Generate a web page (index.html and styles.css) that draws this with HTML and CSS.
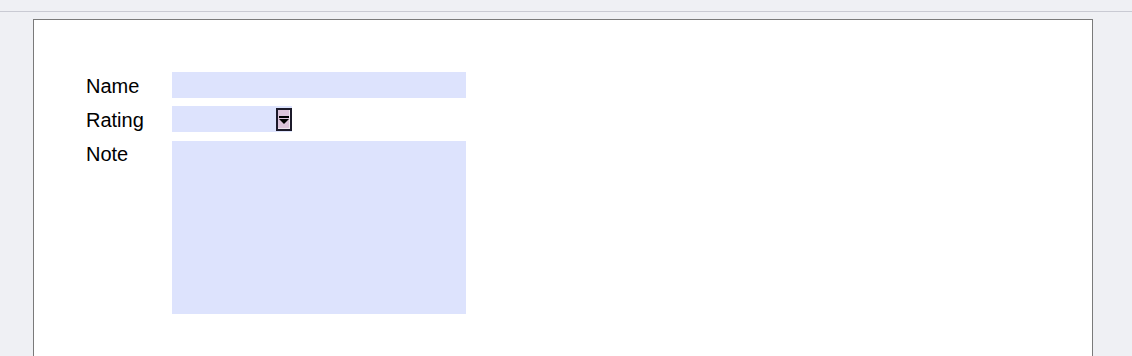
FILE: index.html
```html
<!DOCTYPE html>
<html lang="en">
<head>
<meta charset="utf-8">
<title>Form</title>
<link rel="stylesheet" href="styles.css">
</head>
<body>
<div class="topbar"></div>
<div class="page">
  <div class="card">
    <form class="form">
      <label class="label" for="name">Name</label>
      <input class="field field-text" id="name" type="text">
      <label class="label" for="rating">Rating</label>
      <div class="select">
        <select class="select-input" id="rating"></select>
        <span class="select-btn">
          <svg class="select-arrow" viewBox="0 0 10 8" width="10" height="8"><rect x="0" y="0" width="10" height="2" fill="#000"/><path d="M0 3 H10 L5 8 Z" fill="#000"/></svg>
        </span>
      </div>
      <label class="label label-top" for="note">Note</label>
      <textarea class="field field-area" id="note"></textarea>
    </form>
  </div>
</div>
</body>
</html>
```
FILE: styles.css
```css
html, body {
  margin: 0;
  padding: 0;
}
body {
  background: #eff0f4;
  font-family: "Liberation Sans", Arial, sans-serif;
  height: 356px;
  overflow: hidden;
}
.topbar {
  height: 11px;
  border-bottom: 1px solid #c9cad3;
}
.page {
  padding: 7px 39px 0 33px;
}
.card {
  background: #fff;
  border: 1px solid #7a7a7a;
  border-bottom: none;
  height: 337px;
  box-sizing: border-box;
  padding: 52px 0 0 52px;
  overflow: hidden;
}
.form {
  display: grid;
  grid-template-columns: 86px auto;
  row-gap: 8px;
  align-items: center;
  justify-items: start;
}
.label {
  font-size: 20px;
  line-height: 23px;
  color: #000;
  margin-top: 2px;
}
.label-top {
  align-self: start;
  margin-top: 3px;
}
.field {
  display: block;
  box-sizing: border-box;
  border: none;
  margin: 0;
  padding: 0;
  background: #dde3fd;
  outline: none;
  font: inherit;
}
.field-text {
  width: 294px;
  height: 26px;
}
.field-area {
  width: 294px;
  height: 173px;
  resize: none;
  margin-top: 1px;
}
.select {
  display: flex;
  width: 120px;
  height: 26px;
  background: #dde3fd;
  box-sizing: border-box;
  padding: 2px 0 1px 0;
}
.select-input {
  flex: 1;
  min-width: 0;
  appearance: none;
  -webkit-appearance: none;
  background: transparent;
  border: none;
  outline: none;
  margin: 0;
  padding: 0;
}
.select-btn {
  width: 16px;
  height: 23px;
  box-sizing: border-box;
  border: 2px solid #1c1a2a;
  background: #dcc4da;
  box-shadow: inset -1px -1px 0 #efe6ee;
  display: flex;
  align-items: center;
  justify-content: center;
}
.select-arrow {
  display: block;
}
```
